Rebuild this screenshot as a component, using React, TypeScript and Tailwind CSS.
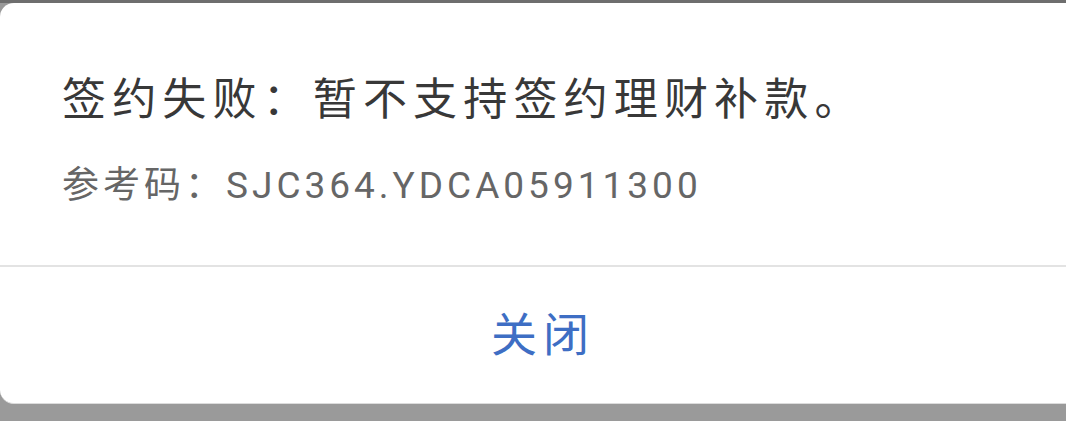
export default function App() {
  return (
    <div
      className="w-[1066px] h-[421px] overflow-hidden bg-[#9a9a9a] relative"
      style={{ fontFamily: "Roboto, 'Noto Sans CJK SC', sans-serif" }}
    >
      <div className="h-[3px] bg-[#6e6e6e]" />
      <div className="w-[1090px] h-[401px] bg-white rounded-l-[14px] flex flex-col border-b border-[#dcdcdc]">
        <div className="h-[262px] pl-[62px] flex flex-col">
          <div className="pt-[69px] text-[44px] leading-[56px] tracking-[0.14em] text-[#383838] whitespace-nowrap">
            签约失败：暂不支持签约理财补款。
          </div>
          <div className="mt-[36px] text-[37px] leading-[44px] tracking-[4px] text-[#666666] whitespace-nowrap">
            参考码：SJC364.YDCA05911300
          </div>
        </div>
        <div className="h-[2px] bg-[#e3e3e3] w-[1066px]" />
        <div className="flex-1 w-[1080px] flex items-center justify-center">
          <span className="text-[46px] leading-[56px] tracking-[6px] pl-[6px] text-[#3e6ec4]">关闭</span>
        </div>
      </div>
    </div>
  );
}
